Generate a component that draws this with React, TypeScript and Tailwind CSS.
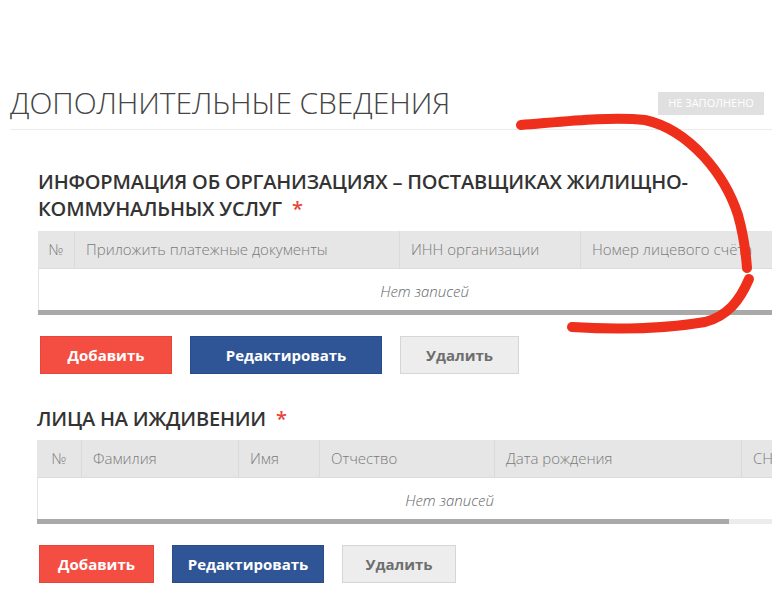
import React from "react";

type Column = { title: string; width: number };

const orgColumns: Column[] = [
  { title: "№", width: 37 },
  { title: "Приложить платежные документы", width: 325 },
  { title: "ИНН организации", width: 181 },
  { title: "Номер лицевого счёта", width: 229 },
];

const dependentColumns: Column[] = [
  { title: "№", width: 45 },
  { title: "Фамилия", width: 157 },
  { title: "Имя", width: 81 },
  { title: "Отчество", width: 175 },
  { title: "Дата рождения", width: 247 },
  { title: "СНИЛС", width: 119 },
];

const EmptyTable = ({
  columns,
  thumb,
}: {
  columns: Column[];
  thumb: string;
}) => {
  const total = columns.reduce((sum, c) => sum + c.width, 0);
  return (
    <div className="overflow-hidden">
      <div style={{ width: total }}>
        <div className="flex h-[38px] bg-[#e6e6e6] border-b border-[#dcdcdc]">
          {columns.map((col, i) => (
            <div
              key={col.title}
              style={{ width: col.width }}
              className={`flex items-center text-[15px] font-light text-[#7a7a7a] whitespace-nowrap overflow-hidden ${
                i === 0 ? "justify-center" : "pl-[11px]"
              } ${i < columns.length - 1 ? "border-r border-[#dadada]" : ""}`}
            >
              {col.title}
            </div>
          ))}
        </div>
        <div className="h-[41px] flex items-center justify-center bg-white border-l border-[#e3e3e3] italic text-[15px] text-[#666] font-light pt-[3px]">
          Нет записей
        </div>
      </div>
      <div className="h-[5px] bg-[#ececec] w-full">
        <div className={`h-full bg-[#a9a9a9] ${thumb}`} />
      </div>
    </div>
  );
};

const Buttons = ({ small }: { small?: boolean }) => (
  <div className="flex gap-[18px]">
    <button
      className={`h-[38px] bg-[#f44d42] text-white text-[15px] font-bold border border-[#e4463c] ${
        small ? "w-[115px]" : "w-[132px]"
      }`}
    >
      Добавить
    </button>
    <button
      className={`h-[38px] bg-[#2f5596] text-white text-[15px] font-bold border border-[#284c88] ${
        small ? "w-[152px]" : "w-[192px]"
      }`}
    >
      Редактировать
    </button>
    <button
      className={`h-[38px] bg-[#ededed] text-[#6e6e6e] text-[15px] font-bold border border-[#d6d6d6] ${
        small ? "w-[114px]" : "w-[119px]"
      }`}
    >
      Удалить
    </button>
  </div>
);

const SectionTitle = ({ children }: { children: React.ReactNode }) => (
  <h2 className="text-[20px] leading-[27px] font-semibold text-[#333] tracking-[-0.2px]">
    {children}
    <span className="text-[#e8443a]">&nbsp;&nbsp;*</span>
  </h2>
);

export default function App() {
  return (
    <div
      className="relative w-[772px] h-[600px] overflow-hidden bg-white"
      style={{ fontFamily: '"Open Sans", "Noto Sans", sans-serif' }}
    >
      <div className="pt-[80px] pl-[10px]">
        <div className="flex items-center justify-between h-[46px] pr-[8px] border-b border-[#ececec] pb-[3px] box-content">
          <h1 className="text-[30px] font-light text-[#444] tracking-[-0.1px] leading-none">
            ДОПОЛНИТЕЛЬНЫЕ СВЕДЕНИЯ
          </h1>
          <span className="h-[23px] w-[106px] bg-[#e0e0e0] text-white text-[11px] flex items-center justify-center">
            НЕ ЗАПОЛНЕНО
          </span>
        </div>

        <div className="pl-[28px] pt-[38px]">
          <div className="w-[680px]">
            <SectionTitle>
              ИНФОРМАЦИЯ ОБ ОРГАНИЗАЦИЯХ – ПОСТАВЩИКАХ ЖИЛИЩНО-КОММУНАЛЬНЫХ УСЛУГ
            </SectionTitle>
          </div>
          <div className="mt-[9px]">
            <EmptyTable columns={orgColumns} thumb="w-full" />
          </div>
          <div className="mt-[21px] pl-[2px]">
            <Buttons />
          </div>
        </div>

        <div className="pl-[27px] pt-[31px]">
          <SectionTitle>ЛИЦА НА ИЖДИВЕНИИ</SectionTitle>
          <div className="mt-[8px]">
            <EmptyTable columns={dependentColumns} thumb="w-[692px]" />
          </div>
          <div className="mt-[21px] pl-[2px]">
            <Buttons small />
          </div>
        </div>
      </div>

      <svg
        className="absolute inset-0 pointer-events-none"
        width="772"
        height="600"
        viewBox="0 0 772 600"
      >
        <path
          d="M521 125 C 560 122, 610 116, 645 120 C 690 130, 725 175, 738 215 C 745 240, 746 255, 747 268"
          fill="none"
          stroke="#ee2f1c"
          strokeWidth="10"
          strokeLinecap="round"
        />
        <path
          d="M749 279 C 740 300, 728 316, 705 322 C 670 328, 620 330, 572 327"
          fill="none"
          stroke="#ee2f1c"
          strokeWidth="10"
          strokeLinecap="round"
        />
      </svg>
    </div>
  );
}
